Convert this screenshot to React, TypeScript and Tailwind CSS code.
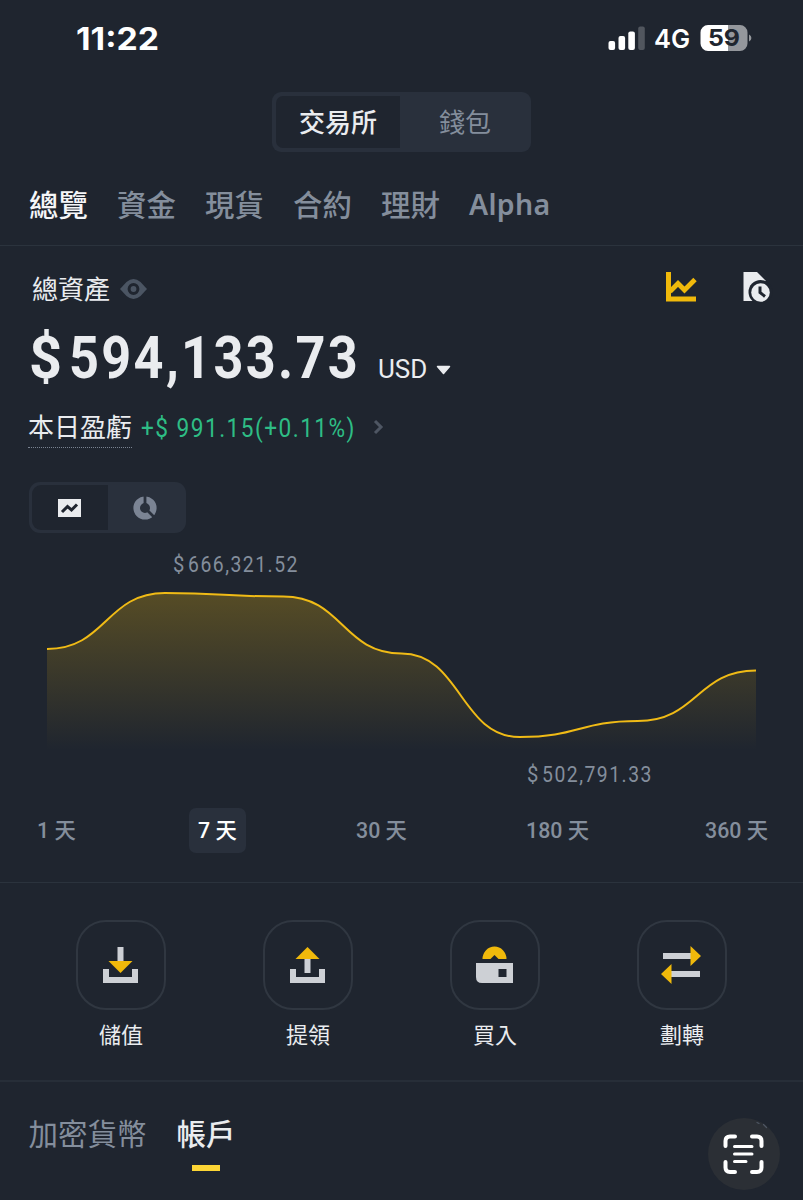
import React from "react";

const cjk = "font-['Noto_Sans_CJK_TC','Noto_Sans',sans-serif]";
const din = "inline-block origin-left whitespace-pre font-['Roboto','Noto_Sans_CJK_TC',sans-serif]";

function StatusBar() {
  return (
    <div className="flex h-[92px] items-start pt-[20px]">
      <div className="ml-[76px] h-[36px] w-[532px] font-['Inter',sans-serif] text-[31px] leading-[37px] font-bold text-white">
        <span className="inline-block origin-left scale-x-[1.09]">11:22</span>
      </div>
      <svg className="h-[36px] w-[38px] shrink-0" viewBox="0 0 38 36" fill="#fff">
        <rect x="0.5" y="21" width="6.6" height="9" rx="2" />
        <rect x="10.5" y="16" width="6.6" height="14" rx="2" />
        <rect x="20.3" y="11.5" width="6.6" height="18.5" rx="2" />
        <rect x="30.2" y="6.5" width="6.6" height="23.5" rx="2" fill="#51565e" />
      </svg>
      <div className="ml-[8px] w-[46px] font-['Inter',sans-serif] text-[25.500px] leading-[38px] font-semibold text-white">4G</div>
      <svg className="mt-[4px] h-[27px] w-[52px] shrink-0" viewBox="0 0 52 27">
        <path d="M8 1h20v26H8a7.500 7.500 0 0 1-7.500-7.500v-11A7.500 7.500 0 0 1 8 1z" fill="#fff" />
        <path d="M28 1h12a7.500 7.500 0 0 1 7.500 7.500v11A7.500 7.500 0 0 1 40 27H28z" fill="#94979c" />
        <path d="M49 10.500q2.400 1 2.400 3.500t-2.400 3.500z" fill="#94979c" />
        <text x="24" y="22.300" textAnchor="middle" fontFamily="Inter, sans-serif" fontWeight="700" fontSize="23" textLength="32" lengthAdjust="spacingAndGlyphs" fill="#20262f">59</text>
      </svg>
    </div>
  );
}

function TopTabs() {
  const tabs = ["總覽", "資金", "現貨", "合約", "理財"];
  return (
    <div className="flex h-[94px] items-start border-b border-[#2b333d] pt-[29px] pl-[29px] text-[29.400px] leading-[44px] font-medium text-[#848e9c]">
      {tabs.map((t, i) => (
        <div key={t} className={i === 0 ? "w-[88px] text-[#f5f6f8]" : "w-[88px]"}>{t}</div>
      ))}
      <div className="pt-[1px] font-['Noto_Sans',sans-serif] text-[28.500px] font-semibold tracking-[0.300px]">Alpha</div>
    </div>
  );
}

const curve =
  "M0 59C59 59 59 3 118 3C177 3 177 6.500 236.300 6.500C295.500 6.500 295.500 63.500 354.500 63.500C413.600 63.500 413.600 147 472.700 147C532 147 532 131 590.800 131C650 131 650 80.500 709 80.500";

function Chart() {
  return (
    <svg className="ml-[47px] block h-[170px] w-[710px]" viewBox="0 0 710 170">
      <defs>
        <linearGradient id="area" gradientUnits="userSpaceOnUse" x1="0" y1="0" x2="0" y2="160">
          <stop offset="0" stopColor="#f0b90b" stopOpacity="0.270" />
          <stop offset="1" stopColor="#f0b90b" stopOpacity="0" />
        </linearGradient>
      </defs>
      <path d={curve + "V164H0Z"} fill="url(#area)" />
      <path d={curve} fill="none" stroke="#f0bb16" strokeWidth="2" />
    </svg>
  );
}

function Action({ label, children }: { label: string; children: React.ReactNode }) {
  return (
    <div className="flex w-[187px] flex-col items-center">
      <div className="h-[90px] w-[90px] rounded-[30px] border-2 border-[#303741]">
        <svg className="h-[86px] w-[86px]" viewBox="2 2 86 86">{children}</svg>
      </div>
      <div className="mt-[6px] text-[22px] leading-[34px] text-[#eaecef]">{label}</div>
    </div>
  );
}

function ChartLabel({ amount }: { amount: string }) {
  return (
    <div className="flex font-['Roboto',sans-serif] text-[22px] leading-[30px] text-[#848e9c]">
      <div className="w-[15px] shrink-0">
        <span className={din + " scale-x-[.92]"}>$</span>
      </div>
      <span className={din + " scale-x-[.88] tracking-[1.700px]"}>{amount}</span>
    </div>
  );
}

export default function App() {
  return (
    <div className={"relative h-[1200px] w-[803px] overflow-hidden bg-[#1f252f] " + cjk}>
      <StatusBar />

      <div className="mx-auto flex h-[60px] w-[259px] rounded-[9px] bg-[#29303c] p-[4px] text-[26px] leading-[50px]">
        <div className="w-[124px] rounded-l-[7px] bg-[#1f252f] text-center font-medium text-[#eaecef]">交易所</div>
        <div className="flex-1 pl-[3px] text-center text-[#848e9c]">錢包</div>
      </div>

      <TopTabs />

      <div className="flex h-[78px] pl-[32px]">
        <div className="pt-[22px] text-[26px] leading-[40px] text-[#eaecef]">總資產</div>
        <svg className="mt-[32px] ml-[10px] h-[22px] w-[27px]" viewBox="0 0 27 22">
          <path d="M0 11 6.500 4Q13.500-2 20.500 4L27 11 20.500 18Q13.500 24 6.500 18Z" fill="#4b5563" />
          <circle cx="13.500" cy="11" r="4.400" fill="none" stroke="#1f252f" strokeWidth="3" />
        </svg>
        <svg className="mt-[26px] ml-[518px] h-[32px] w-[32px]" viewBox="0 0 32 32" fill="none" stroke="#f0b90b" strokeWidth="5">
          <path d="M3.500 0v27H31" />
          <path d="M5 19.500 13 11.500l6.500 6.500L30 7.500" strokeWidth="4.800" />
        </svg>
        <svg className="mt-[26px] ml-[46px] h-[32px] w-[30px]" viewBox="0 0 30 32">
          <path d="M0.500 0H14L23 9V29H0.500Z" fill="#eaecef" />
          <circle cx="17.500" cy="20" r="12" fill="#1f252f" />
          <circle cx="17.500" cy="20.500" r="9.300" fill="#eaecef" />
          <path d="M17 14.500V20.500L22 24.500" fill="none" stroke="#1f252f" strokeWidth="3" />
        </svg>
      </div>

      <div className="flex h-[76px] pl-[29px] text-[#eaecef]">
        <div className="mt-[1px] flex w-[349px] shrink-0 font-['Roboto',sans-serif] text-[60px] leading-[66px] font-bold">
          <div className="w-[40px] shrink-0">
            <span className={din + " scale-x-[.96]"}>$</span>
          </div>
          <span className={din + " shrink-0 scale-x-[.87] tracking-[2.700px]"}>594,133.73</span>
        </div>
        <div className="w-[58px] pt-[25px] text-[25px] leading-[36px]">
          <span className={din + " scale-x-[1.04]"}>USD</span>
        </div>
        <svg className="mt-[41px] h-[11px] w-[15px]" viewBox="0 0 15 11">
          <path d="M1.500 1.500H13.500L7.500 8.500Z" fill="#eaecef" stroke="#eaecef" strokeLinejoin="round" strokeWidth="1.500" />
        </svg>
      </div>

      <div className="flex h-[82px] pt-[7px] pl-[28px]">
        <div className="h-[41px] w-[104px] border-b border-dotted border-[#7a8391] text-[26px] leading-[38px] text-[#eaecef]">本日盈虧</div>
        <div className="ml-[9px] w-[232px] text-[26px] leading-[38px] text-[#2ebd85]">
          <span className={din + " scale-x-[.87] tracking-[1.700px]"}>+$ 991.15(+0.11%)</span>
        </div>
        <svg className="mt-[11px] h-[18px] w-[12px]" viewBox="0 0 12 18">
          <path d="M2 3 8 9 2 15" fill="none" stroke="#4e5663" strokeWidth="3" />
        </svg>
      </div>

      <div className="ml-[28.500px] flex h-[51px] w-[157px] rounded-[11px] bg-[#29303c] p-[3px]">
        <div className="flex w-[76px] items-center justify-center rounded-l-[9px] bg-[#1f252f]">
          <svg className="mr-[1px] h-[18px] w-[23px]" viewBox="0 0 23 18">
            <path d="M0 0H23V18H0Z" fill="#eaecef" />
            <path d="M4 13 9.500 7.500 13.500 11 19 5.500" fill="none" stroke="#1f252f" strokeWidth="3" />
          </svg>
        </div>
        <div className="flex flex-1 items-center justify-center pr-[1px]">
          <svg className="h-[24px] w-[24px]" viewBox="0 0 24 24">
            <circle cx="12" cy="12" r="8.300" fill="none" stroke="#7b8494" strokeWidth="6.600" />
            <path d="M12 0V8M14.500 14.500 21.500 21.500" stroke="#29303c" strokeWidth="2.800" />
          </svg>
        </div>
      </div>

      <div className="h-[57px] pt-[17px] pl-[173px]">
        <ChartLabel amount="666,321.52" />
      </div>
      <Chart />
      <div className="h-[48px] pl-[527px]">
        <ChartLabel amount="502,791.33" />
      </div>

      <div className="flex h-[75px] border-b border-[#2b333d] text-[22px] leading-[40px] font-medium text-[#848e9c]">
        <div className="w-[189px] pl-[37px]"><span className={din + " scale-x-[.97]"}>1 天</span></div>
        <div className="h-[45px] w-[57px] rounded-[7px] bg-[#29303c] pl-[9px] text-white"><span className={din + " scale-x-[.97]"}>7 天</span></div>
        <div className="w-[280px] pl-[110px]"><span className={din + " scale-x-[.97]"}>30 天</span></div>
        <div className="w-[179px]"><span className={din + " scale-x-[.97]"}>180 天</span></div>
        <div><span className={din + " scale-x-[.97]"}>360 天</span></div>
      </div>

      <div className="flex h-[199px] border-b-2 border-[#272e38] pt-[37px] pl-[27.500px]">
        <Action label="儲值">
          <path d="M27 49h6v8h23v-8h6v14H27zM41.500 27h6v15h-6z" fill="#cdd0d5" />
          <path d="M32.500 41H56.500L44.500 53Z" fill="#f0b90b" />
        </Action>
        <Action label="提領">
          <path d="M27 49h6v8h23v-8h6v14H27zM41.500 38h6v15h-6z" fill="#cdd0d5" />
          <path d="M32.500 39H56.500L44.500 27Z" fill="#f0b90b" />
        </Action>
        <Action label="買入">
          <path d="M26 43h37v20H32q-6 0-6-6zM48.500 49v8h8v-8z" fill="#cdd0d5" fillRule="evenodd" />
          <path d="M32.500 39A12 12.500 0 0 1 56.500 39H48.500L44.500 35L40.500 39Z" fill="#f0b90b" />
        </Action>
        <Action label="劃轉">
          <path d="M26 33h29v6H26zM34 51h29v6H34z" fill="#cdd0d5" />
          <path d="M53.500 26 64 36 53.500 46ZM34.500 44 24 54 34.500 64Z" fill="#f0b90b" />
        </Action>
      </div>

      <div className="flex pt-[29px] pl-[28.500px] text-[29.500px] leading-[42px] text-[#848e9c]">
        <div className="w-[148px]">加密貨幣</div>
        <div className="flex w-[59px] flex-col items-center font-medium text-[#eaecef]">
          帳戶
          <span className="mt-[12px] h-[6px] w-[28px] bg-[#fcd535]" />
        </div>
      </div>

      <div className="absolute top-[1118px] left-[708px] h-[72px] w-[72px] rounded-full bg-[#2b2f35]">
        <svg className="h-[72px] w-[72px]" viewBox="0 0 72 72" fill="none" stroke="#fff" strokeLinecap="round" strokeWidth="4">
          <path d="M17.500 28V23Q17.500 18.500 22 18.500H27M44 18.500H49Q53.500 18.500 53.500 23V28M53.500 44V49.500Q53.500 54 49 54H44M27 54H22Q17.500 54 17.500 49.500V44" />
          <path d="M26.500 28.500H44M26.500 36H44M26.500 43.500H38" strokeWidth="3" />
          <path d="M49 4.500l2 1M55.500 6.500l3 3" stroke="#4e5663" strokeWidth="1.200" />
        </svg>
      </div>
    </div>
  );
}
